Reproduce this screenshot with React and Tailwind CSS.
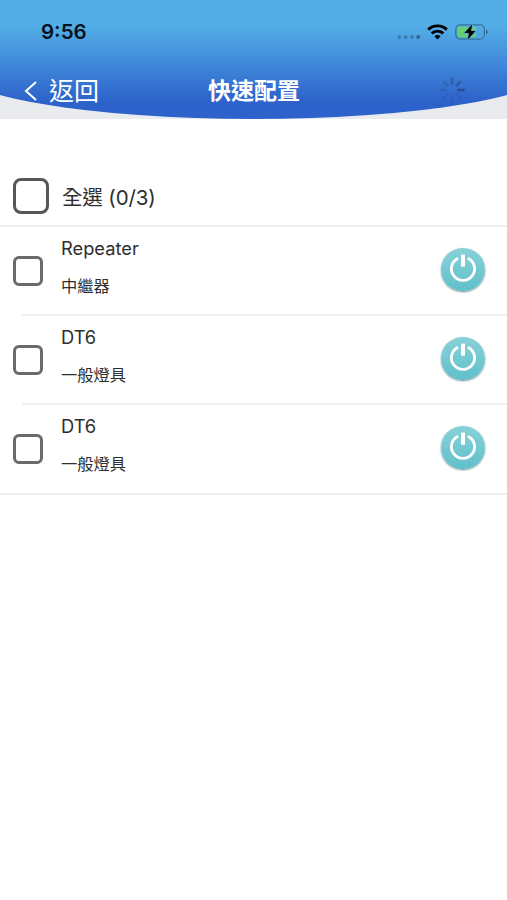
import React, { useState } from 'react';

const devices = [
  { id: 1, name: 'Repeater', type: '中繼器' },
  { id: 2, name: 'DT6', type: '一般燈具' },
  { id: 3, name: 'DT6', type: '一般燈具' },
];

const SignalDots = () => (
  <svg width="24" height="6" viewBox="0 0 24 6" className="mt-[9px]" fill="#26506f">
    <circle cx="2.3" cy="3" r="1.9" opacity="0.45" />
    <circle cx="8.6" cy="3" r="1.9" opacity="0.45" />
    <circle cx="14.9" cy="3" r="1.9" opacity="0.45" />
    <circle cx="21.2" cy="3" r="2.1" opacity="0.7" />
  </svg>
);

const Wifi = () => (
  <svg width="21" height="16" viewBox="0 0 21 16" className="ml-[6px]" fill="none" stroke="#000" strokeWidth="2.9">
    <path d="M1.2 5.6C6.3 0.6 14.7 0.6 19.8 5.6" />
    <path d="M4.7 9.4C8 6.3 13 6.3 16.3 9.4" />
    <path d="M10.5 15.4L7.4 12.3C9.2 10.7 11.8 10.7 13.6 12.3Z" fill="#000" stroke="none" />
  </svg>
);

const Battery = () => (
  <svg width="34" height="16" viewBox="0 0 34 16" className="ml-[7px]">
    <rect x="0.8" y="0.8" width="28.6" height="14.4" rx="4.4" fill="none" stroke="#3a7096" strokeWidth="1.2" />
    <path d="M31 5.5C33.2 6.3 33.2 9.7 31 10.5Z" fill="#32698f" />
    <rect x="2.7" y="2.7" width="18.3" height="10.6" rx="2" fill="#65cf72" />
    <path d="M17.3 0.3L9.3 9H14L12.6 15.8L20.6 7H15.9Z" fill="#000" stroke="#55a9dc" strokeWidth="1.4" paintOrder="stroke" />
  </svg>
);

const Spinner = () => (
  <svg width="28" height="28" viewBox="-14 -14 28 28" stroke="#2b4680" strokeWidth="2.6" strokeLinecap="round">
    <path d="M0 -6.5V-11.5" opacity="0.5" />
    <path d="M0 -6.5V-11.5" opacity="0.6" transform="rotate(45)" />
    <path d="M0 -6.5V-11.5" opacity="0.85" transform="rotate(90)" />
    <path d="M0 -6.5V-11.5" opacity="0.2" transform="rotate(135)" />
    <path d="M0 -6.5V-11.5" opacity="0.2" transform="rotate(180)" />
    <path d="M0 -6.5V-11.5" opacity="0.2" transform="rotate(225)" />
    <path d="M0 -6.5V-11.5" opacity="0.25" transform="rotate(270)" />
    <path d="M0 -6.5V-11.5" opacity="0.35" transform="rotate(315)" />
  </svg>
);

const PowerButton = () => (
  <button className="mb-[5px] w-11 h-[43px] rounded-full bg-linear-to-b from-[#88d1d8] to-[#5fc0ca] shadow-[0_1px_2px_rgba(40,90,100,0.7)]">
    <svg width="44" height="43" viewBox="0 0.4 44 43" fill="none" stroke="#fff">
      <path d="M17.2 10.6A11.6 11.6 0 1 0 26.8 10.6" strokeWidth="2.8" />
      <path d="M22 7V19.1" strokeWidth="4" />
    </svg>
  </button>
);

const App = () => {
  const [selected, setSelected] = useState([]);

  const toggle = (id) => {
    setSelected(selected.includes(id) ? selected.filter(s => s !== id) : [...selected, id]);
  };

  const toggleAll = () => {
    setSelected(selected.length === devices.length ? [] : devices.map(d => d.id));
  };

  return (
    <div className="min-h-screen bg-white font-[Inter,'Noto_Sans_CJK_TC',sans-serif] text-[#2e2e2e]">
      <header className="relative h-[119px] bg-[#e9ebef] overflow-hidden">
        {/* curved blue backdrop, wider than the screen */}
        <div className="absolute inset-y-0 -inset-x-[47px] rounded-b-[50%_52px] bg-linear-to-b from-[#53ade6] from-22% via-[#4189da] via-53% to-[#2d62ca] to-85%" />
        <div className="relative h-16 pl-[41px] pr-[18px] flex items-center justify-between">
          <span className="text-[20.5px] font-semibold leading-6 text-[#06131f]">9:56</span>
          <div className="flex items-center">
            <SignalDots />
            <Wifi />
            <Battery />
          </div>
        </div>
        <div className="relative h-[52px] pl-6 pr-[41px] flex items-center text-white">
          <button className="w-[184px] pt-px flex items-center gap-3 text-[25px] leading-8">
            <svg width="13" height="20" viewBox="0 0 13 20" fill="none" stroke="#fff" strokeWidth="2">
              <path d="M12 1L2 10L12 19" />
            </svg>
            返回
          </button>
          <h1 className="flex-1 pt-px text-[23px] font-bold leading-8">快速配置</h1>
          <Spinner />
        </div>
      </header>

      <main className="pt-[48px]">
        <div className="h-[60px] pl-[13px] flex items-center border-b-2 border-[#efefef]">
          <button
            className={`w-[36px] h-[36px] rounded-[8px] border-[3px] border-[#575757] ${selected.length === devices.length ? 'bg-[#5cbfca]' : 'bg-white'}`}
            onClick={toggleAll}
          />
          <span className="ml-[13px] pt-[3px] text-[20.5px] leading-7 tracking-[-0.15px]">全選 ({selected.length}/{devices.length})</span>
        </div>

        <ul className="h-[268px] border-b-2 border-[#efefef]">
          {devices.map((d, i) => (
            <li key={d.id} className="relative h-[89px] pl-[13px] pr-[22px] flex items-center">
              {i > 0 && <div className="absolute left-[22px] right-0 -top-[2px] h-[2px] bg-[#efefef]" />}
              <button
                className={`mb-[2px] w-[30px] h-[30px] rounded-[6px] border-[3px] border-[#6a6a6a] ${selected.includes(d.id) ? 'bg-[#5cbfca]' : 'bg-white'}`}
                onClick={() => toggle(d.id)}
              />
              <div className="ml-[18px] mb-[10px] flex-1 flex flex-col gap-[14px]">
                <span className="text-[18.3px] leading-6">{d.name}</span>
                <span className="text-[16.3px] leading-6">{d.type}</span>
              </div>
              <PowerButton />
            </li>
          ))}
        </ul>
      </main>
    </div>
  );
};

export default App;
